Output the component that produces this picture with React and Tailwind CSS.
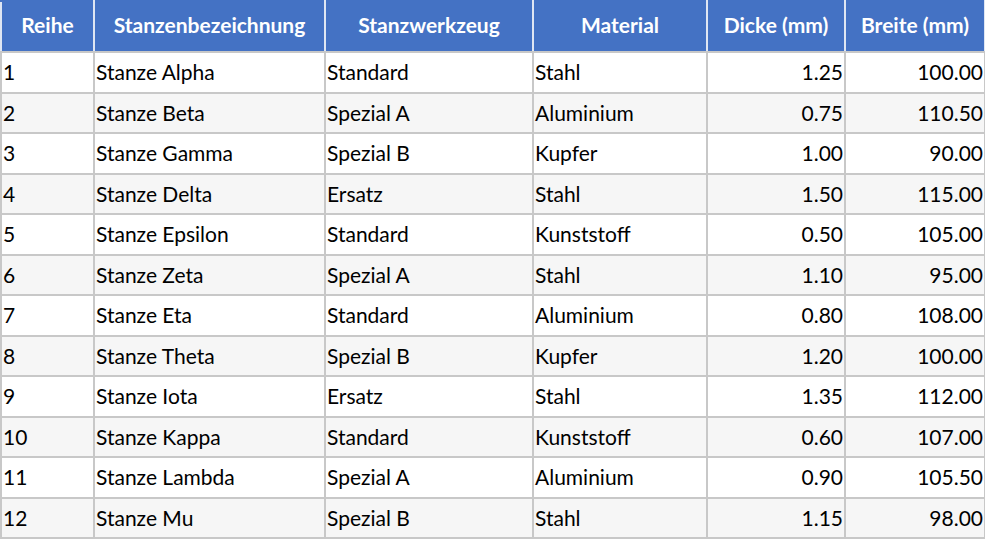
import React from 'react';

const rows = [
  [1, 'Stanze Alpha', 'Standard', 'Stahl', '1.25', '100.00'],
  [2, 'Stanze Beta', 'Spezial A', 'Aluminium', '0.75', '110.50'],
  [3, 'Stanze Gamma', 'Spezial B', 'Kupfer', '1.00', '90.00'],
  [4, 'Stanze Delta', 'Ersatz', 'Stahl', '1.50', '115.00'],
  [5, 'Stanze Epsilon', 'Standard', 'Kunststoff', '0.50', '105.00'],
  [6, 'Stanze Zeta', 'Spezial A', 'Stahl', '1.10', '95.00'],
  [7, 'Stanze Eta', 'Standard', 'Aluminium', '0.80', '108.00'],
  [8, 'Stanze Theta', 'Spezial B', 'Kupfer', '1.20', '100.00'],
  [9, 'Stanze Iota', 'Ersatz', 'Stahl', '1.35', '112.00'],
  [10, 'Stanze Kappa', 'Standard', 'Kunststoff', '0.60', '107.00'],
  [11, 'Stanze Lambda', 'Spezial A', 'Aluminium', '0.90', '105.50'],
  [12, 'Stanze Mu', 'Spezial B', 'Stahl', '1.15', '98.00'],
];

const headers = ['Reihe', 'Stanzenbezeichnung', 'Stanzwerkzeug', 'Material', 'Dicke (mm)', 'Breite (mm)'];

export default function App() {
  return (
    <div className="bg-white w-[985px] h-[539px] overflow-hidden" style={{ fontFamily: 'Lato, "Open Sans", sans-serif' }}>
      <table className="table-fixed border-collapse w-[984px] text-[21px] leading-[24px] text-black">
        <colgroup>
          <col className="w-[93px]" />
          <col className="w-[231px]" />
          <col className="w-[208px]" />
          <col className="w-[174px]" />
          <col className="w-[138px]" />
          <col className="w-[140px]" />
        </colgroup>
        <thead>
          <tr className="h-[51px] bg-[#4472c4]">
            {headers.map((h) => (
              <th key={h} className="border-2 border-[#dfe6f3] border-b-[#c8c8c8] border-t-[#4472c4] text-white font-bold text-center px-1 pb-[4px] overflow-hidden whitespace-nowrap">
                {h}
              </th>
            ))}
          </tr>
        </thead>
        <tbody>
          {rows.map((r, i) => (
            <tr key={r[0]} className={i % 2 === 0 ? 'h-[40.5px] bg-white' : 'h-[40.5px] bg-[#f6f6f6]'}>
              <td className="border-2 border-[#c8c8c8] px-[1px] text-left">{r[0]}</td>
              <td className="border-2 border-[#c8c8c8] px-[1px] text-left">{r[1]}</td>
              <td className="border-2 border-[#c8c8c8] px-[1px] text-left">{r[2]}</td>
              <td className="border-2 border-[#c8c8c8] px-[1px] text-left">{r[3]}</td>
              <td className="border-2 border-[#c8c8c8] px-[1px] text-right">{r[4]}</td>
              <td className="border-2 border-[#c8c8c8] px-[1px] text-right">{r[5]}</td>
            </tr>
          ))}
        </tbody>
      </table>
    </div>
  );
}
